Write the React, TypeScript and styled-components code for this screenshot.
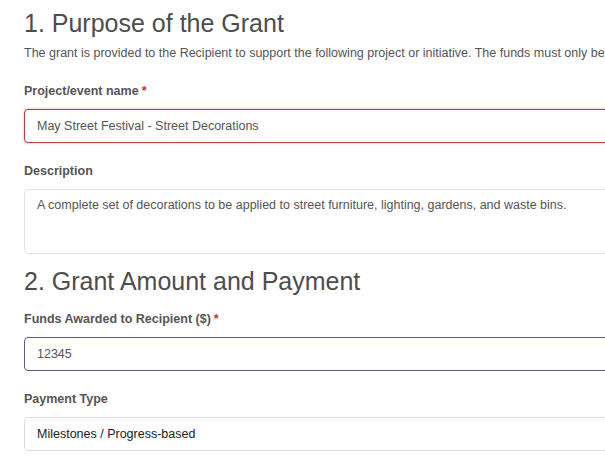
import React from 'react';
import styled, { createGlobalStyle } from 'styled-components';

const GlobalStyle = createGlobalStyle`
  html, body {
    margin: 0;
    padding: 0;
    background: #ffffff;
    overflow: hidden;
  }
  body {
    font-family: "Liberation Sans", Arial, sans-serif;
    color: #555555;
  }
`;

const Page = styled.div`
  width: 720px;
  padding: 8px 0 0 24px;
`;

const SectionTitle = styled.h2<{ $gap?: number }>`
  margin: ${(p) => p.$gap ?? 0}px 0 0;
  font-size: 25px;
  line-height: 30px;
  font-weight: normal;
  color: #4d4d4d;
  white-space: nowrap;
`;

const Intro = styled.p`
  margin: 6px 0 21px;
  font-size: 12.5px;
  line-height: 18px;
  color: #555555;
  white-space: nowrap;
`;

const FormGroup = styled.div<{ $last?: boolean; $top?: number }>`
  margin-top: ${(p) => p.$top ?? 0}px;
  margin-bottom: ${(p) => (p.$last ? 0 : 20)}px;
`;

const Label = styled.label`
  display: block;
  margin-bottom: 9px;
  font-size: 12.5px;
  line-height: 17px;
  font-weight: bold;
  color: #555555;
`;

const Required = styled.span`
  color: #c9302c;
  margin-left: 3px;
`;

const fieldTone = {
  error: 'border-color: #b0413e; box-shadow: 0 0 3px rgba(206, 132, 131, 0.6);',
  active: 'border-color: #5f5b7e;',
  normal: 'border-color: #dddddd;',
};

const Field = styled.div<{ $tone?: keyof typeof fieldTone; $dark?: boolean }>`
  box-sizing: border-box;
  width: 640px;
  height: 34px;
  display: flex;
  align-items: center;
  padding: 0 12px;
  border: 1px solid #dddddd;
  border-radius: 4px;
  background: #ffffff;
  font-size: 12.5px;
  color: ${(p) => (p.$dark ? '#222222' : '#555555')};
  white-space: nowrap;
  ${(p) => fieldTone[p.$tone ?? 'normal']}
`;

const TextArea = styled.div`
  box-sizing: border-box;
  width: 640px;
  height: 65px;
  padding: 6px 12px;
  border: 1px solid #e3e3e3;
  border-radius: 4px;
  font-size: 12.5px;
  line-height: 18px;
  color: #555555;
  white-space: nowrap;
`;

export default function App() {
  return (
    <Page>
      <GlobalStyle />
      <SectionTitle>1. Purpose of the Grant</SectionTitle>
      <Intro>
        The grant is provided to the Recipient to support the following project or initiative. The
        funds must only be
      </Intro>

      <FormGroup>
        <Label>
          Project/event name<Required>*</Required>
        </Label>
        <Field $tone="error">May Street Festival - Street Decorations</Field>
      </FormGroup>

      <FormGroup $last>
        <Label>Description</Label>
        <TextArea>
          A complete set of decorations to be applied to street furniture, lighting, gardens, and
          waste bins.
        </TextArea>
      </FormGroup>

      <SectionTitle $gap={12}>2. Grant Amount and Payment</SectionTitle>

      <FormGroup $top={15}>
        <Label>
          Funds Awarded to Recipient ($)<Required>*</Required>
        </Label>
        <Field $tone="active">12345</Field>
      </FormGroup>

      <FormGroup $last>
        <Label>Payment Type</Label>
        <Field $dark>Milestones / Progress-based</Field>
      </FormGroup>
    </Page>
  );
}
